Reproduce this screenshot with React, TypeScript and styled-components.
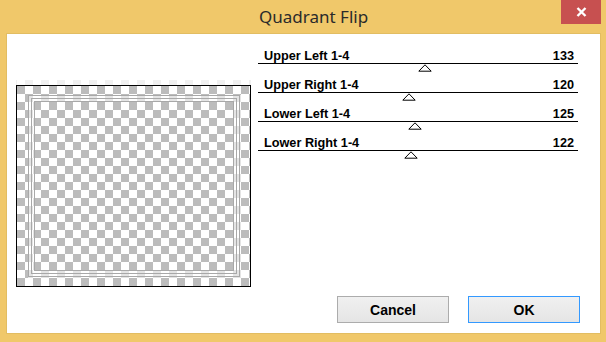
import React from "react";
import styled, { createGlobalStyle } from "styled-components";

const Global = createGlobalStyle`
  html, body { margin: 0; padding: 0; background: #f0c86a; }
  body { width: 606px; height: 342px; overflow: hidden; }
`;

const Window = styled.div`
  width: 606px;
  height: 342px;
  background: #f0c86a;
  display: flex;
  flex-direction: column;
  box-sizing: border-box;
`;

const TitleBar = styled.div`
  height: 34px;
  display: flex;
  align-items: flex-start;
  flex-shrink: 0;
`;

const Title = styled.div`
  font-family: "Noto Sans", "Open Sans", sans-serif;
  font-size: 17px;
  color: #2a2a2a;
  line-height: 34px;
  padding-left: 259px;
`;

const CloseButton = styled.div`
  margin-left: auto;
  margin-right: 5px;
  width: 40px;
  height: 24px;
  background: #c75050;
  color: #fff;
  display: flex;
  align-items: center;
  justify-content: center;
`;

const Client = styled.div`
  margin: 0 6px 9px 7px;
  flex: 1;
  background: #fff;
  box-shadow: 0 0 0 1px #e2bd62;
  display: flex;
  flex-direction: column;
  padding: 14px 20px 10px 9px;
  box-sizing: border-box;
`;

const Main = styled.div`
  display: flex;
  gap: 7px;
  align-items: flex-start;
`;

const PreviewWrap = styled.div`
  margin-top: 32px;
  display: flex;
  flex-direction: column;
`;

const FaintStrip = styled.div`
  height: 5px;
  width: 235px;
  opacity: 0.22;
  background-color: #fff;
  background-image: linear-gradient(45deg, #bdbdbd 25%, transparent 25%, transparent 75%, #bdbdbd 75%),
    linear-gradient(45deg, #bdbdbd 25%, transparent 25%, transparent 75%, #bdbdbd 75%);
  background-size: 16px 16px;
  background-position: 1px 0, 9px 8px;
`;

const PreviewBox = styled.div`
  width: 235px;
  height: 202px;
  border: 1px solid #000;
  box-sizing: border-box;
  display: flex;
`;

const SliderPanel = styled.div`
  width: 320px;
  margin-right: 2px;
  display: flex;
  flex-direction: column;
`;

const SliderRow = styled.div`
  display: flex;
  flex-direction: column;
  height: 29px;
`;

const SliderHeader = styled.div`
  height: 15px;
  display: flex;
  justify-content: space-between;
  align-items: center;
  padding: 0 4px 0 6px;
  border-bottom: 1px solid #000;
  font-family: "Liberation Sans", Arial, sans-serif;
  font-weight: bold;
  font-size: 12.7px;
  line-height: 18px;
  color: #000;
  overflow: visible;
`;

const Track = styled.div`
  height: 13px;
  display: flex;
  align-items: flex-start;
`;

const Thumb = styled.svg`
  display: block;
  width: 14px;
  height: 8px;
`;

const ButtonRow = styled.div`
  margin-top: auto;
  display: flex;
  justify-content: flex-end;
  gap: 19px;
`;

const Button = styled.div<{ $primary?: boolean }>`
  width: 112px;
  height: 27px;
  box-sizing: border-box;
  border: 1px solid ${(p) => (p.$primary ? "#3399ff" : "#acacac")};
  background: linear-gradient(#f0f0f0, #e5e5e5);
  display: flex;
  align-items: center;
  justify-content: center;
  font-family: "Liberation Sans", Arial, sans-serif;
  font-weight: bold;
  font-size: 14px;
  color: #000;
`;

const sliders = [
  { label: "Upper Left 1-4", value: 133 },
  { label: "Upper Right 1-4", value: 120 },
  { label: "Lower Left 1-4", value: 125 },
  { label: "Lower Right 1-4", value: 122 },
];

function Preview() {
  const w = 233;
  const h = 200;
  const frames = [0.5, 3.5, 6.5];
  return (
    <svg width={w} height={h} viewBox={`0 0 ${w} ${h}`} style={{ display: "block" }}>
      <defs>
        <pattern id="chk" width="16" height="16" patternUnits="userSpaceOnUse">
          <rect width="16" height="16" fill="#ffffff" />
          <rect x="0" y="0" width="8" height="8" fill="#bcbcbc" />
          <rect x="8" y="8" width="8" height="8" fill="#bcbcbc" />
        </pattern>
      </defs>
      <rect width={w} height={h} fill="url(#chk)" />
      <rect x={14.5} y={12.5} width={206} height={176} fill="none" stroke="#fff" strokeOpacity={0.6} strokeWidth={7} />
      {frames.map((d) => (
        <rect
          key={d}
          x={11 + d}
          y={9 + d}
          width={212 - 2 * d}
          height={182 - 2 * d}
          fill="none"
          stroke="#a8a8a8"
          strokeWidth={1}
        />
      ))}
    </svg>
  );
}

export default function App() {
  return (
    <>
      <Global />
      <Window>
        <TitleBar>
          <Title>Quadrant Flip</Title>
          <CloseButton>
            <svg width="11" height="10" viewBox="0 0 11 10">
              <path d="M1.5 1 L9.5 9 M9.5 1 L1.5 9" stroke="#fff" strokeWidth="2.4" />
            </svg>
          </CloseButton>
        </TitleBar>
        <Client>
          <Main>
            <PreviewWrap>
              <FaintStrip />
              <PreviewBox>
                <Preview />
              </PreviewBox>
            </PreviewWrap>
            <SliderPanel>
              {sliders.map((s) => (
                <SliderRow key={s.label}>
                  <SliderHeader>
                    <span>{s.label}</span>
                    <span>{s.value}</span>
                  </SliderHeader>
                  <Track>
                    <Thumb
                      viewBox="0 0 14 8"
                      style={{ marginLeft: `${Math.round((s.value / 255) * 320 - 7)}px` }}
                    >
                      <path d="M7 0.8 L13.2 7.2 L0.8 7.2 Z" fill="#fff" stroke="#000" strokeWidth="1" />
                    </Thumb>
                  </Track>
                </SliderRow>
              ))}
            </SliderPanel>
          </Main>
          <ButtonRow>
            <Button>Cancel</Button>
            <Button $primary>OK</Button>
          </ButtonRow>
        </Client>
      </Window>
    </>
  );
}
